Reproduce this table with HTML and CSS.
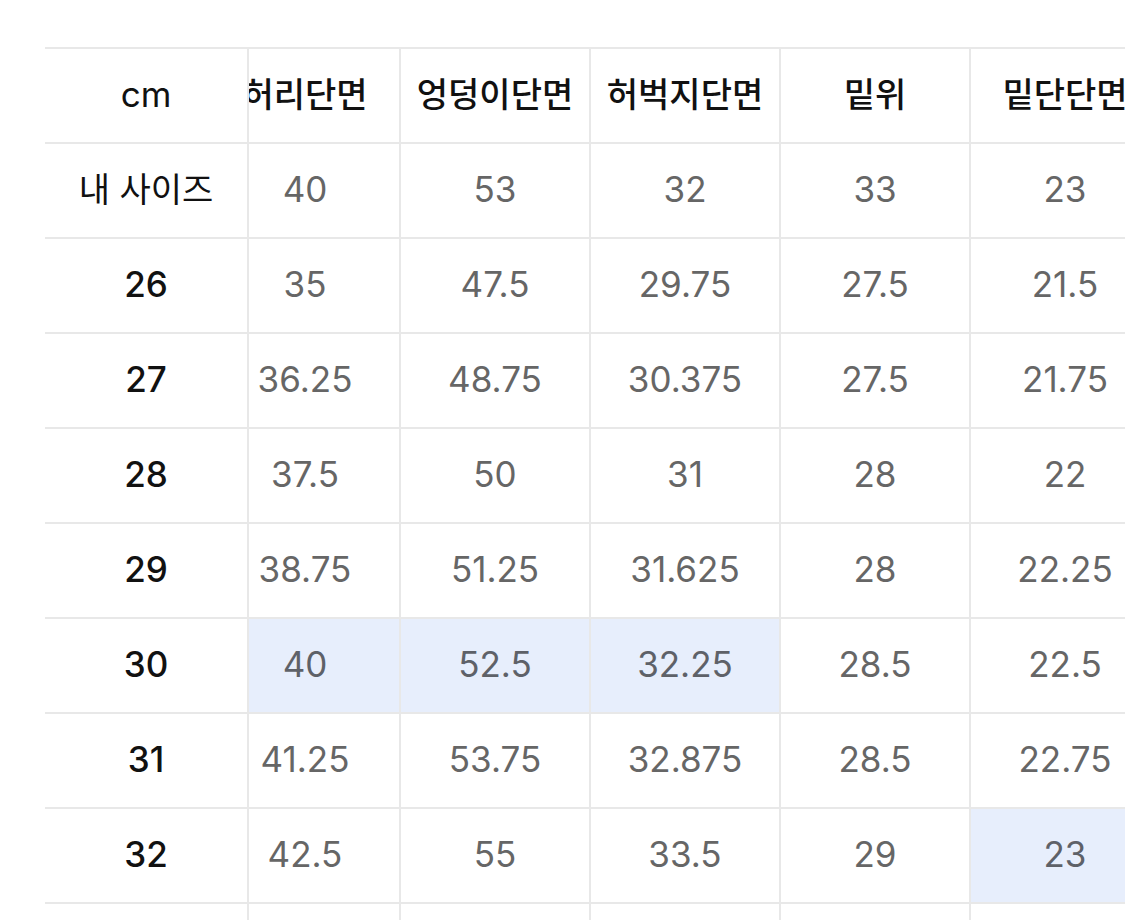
FILE: index.html
```html
<!DOCTYPE html>
<html lang="ko">
<head>
<meta charset="utf-8">
<title>사이즈 표</title>
<link rel="stylesheet" href="styles.css">
</head>
<body>
<div class="size-table">
  <div class="fixed-col">
    <div class="cell head">cm</div>
    <div class="cell label ko">내 사이즈</div>
    <div class="cell label">26</div>
    <div class="cell label">27</div>
    <div class="cell label">28</div>
    <div class="cell label">29</div>
    <div class="cell label">30</div>
    <div class="cell label">31</div>
    <div class="cell label">32</div>
    <div class="cell label"></div>
  </div>
  <div class="scroll-area">
    <div class="grid">
      <div class="cell head ko">허리단면</div>
      <div class="cell head ko">엉덩이단면</div>
      <div class="cell head ko">허벅지단면</div>
      <div class="cell head ko">밑위</div>
      <div class="cell head ko">밑단단면</div>

      <div class="cell val">40</div>
      <div class="cell val">53</div>
      <div class="cell val">32</div>
      <div class="cell val">33</div>
      <div class="cell val">23</div>

      <div class="cell val">35</div>
      <div class="cell val">47.5</div>
      <div class="cell val">29.75</div>
      <div class="cell val">27.5</div>
      <div class="cell val">21.5</div>

      <div class="cell val">36.25</div>
      <div class="cell val">48.75</div>
      <div class="cell val">30.375</div>
      <div class="cell val">27.5</div>
      <div class="cell val">21.75</div>

      <div class="cell val">37.5</div>
      <div class="cell val">50</div>
      <div class="cell val">31</div>
      <div class="cell val">28</div>
      <div class="cell val">22</div>

      <div class="cell val">38.75</div>
      <div class="cell val">51.25</div>
      <div class="cell val">31.625</div>
      <div class="cell val">28</div>
      <div class="cell val">22.25</div>

      <div class="cell val hl">40</div>
      <div class="cell val hl">52.5</div>
      <div class="cell val hl">32.25</div>
      <div class="cell val">28.5</div>
      <div class="cell val">22.5</div>

      <div class="cell val">41.25</div>
      <div class="cell val">53.75</div>
      <div class="cell val">32.875</div>
      <div class="cell val">28.5</div>
      <div class="cell val">22.75</div>

      <div class="cell val">42.5</div>
      <div class="cell val">55</div>
      <div class="cell val">33.5</div>
      <div class="cell val">29</div>
      <div class="cell val hl">23</div>

      <div class="cell val"></div>
      <div class="cell val"></div>
      <div class="cell val"></div>
      <div class="cell val"></div>
      <div class="cell val"></div>
    </div>
  </div>
</div>
</body>
</html>
```
FILE: styles.css
```css
html, body {
  margin: 0;
  padding: 0;
  background: #ffffff;
  overflow: hidden;
}

body {
  font-family: "Inter", "Noto Sans CJK KR", sans-serif;
  color: #111111;
  height: 920px;
}

.size-table {
  display: flex;
  align-items: flex-start;
  padding: 47px 0 0 45px;
  height: 920px;
  box-sizing: border-box;
  overflow: hidden;
}

.fixed-col {
  width: 202px;
  flex: none;
  display: flex;
  flex-direction: column;
  border-right: 2px solid #e8e8e8;
}

.scroll-area {
  flex: 1;
  min-width: 0;
  overflow: hidden;
}

.grid {
  display: grid;
  grid-template-columns: repeat(5, 190px);
  margin-left: -40px;
  width: max-content;
}

.cell {
  flex: none;
  box-sizing: content-box;
  height: 91px;
  padding-bottom: 2px;
  border-top: 2px solid #e8e8e8;
  display: flex;
  align-items: center;
  justify-content: center;
  font-size: 35px;
  line-height: 1;
  white-space: nowrap;
}

.grid .cell {
  border-left: 2px solid #e8e8e8;
}

.head {
  color: #111111;
  font-weight: 400;
}

.head.ko {
  font-weight: 500;
}

.label {
  color: #111111;
  font-weight: 500;
}

.ko {
  font-size: 34px;
  letter-spacing: 0;
}

.label.ko {
  font-weight: 400;
}

.val {
  color: #666666;
  font-weight: 400;
}

.hl {
  background: #e7eefc;
  color: #5e6168;
}
```
